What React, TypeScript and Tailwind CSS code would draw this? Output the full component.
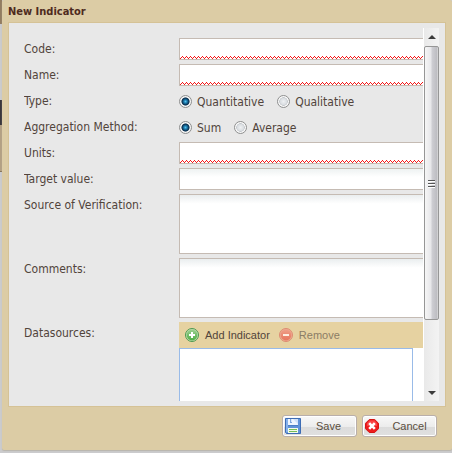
import { useState } from "react";
import type { ReactNode } from "react";

const FIELD_BORDER = "border border-r-0 border-[#c5bbb3]";

function Row({ id, label, children }: { id: string; label: string; children: ReactNode }) {
  return (
    <div className="mb-1 flex items-start">
      <label id={`${id}-label`} htmlFor={id} className="w-[155px] shrink-0 pt-[3px] leading-4">
        {label}
      </label>
      <div className="min-w-0 flex-1">{children}</div>
    </div>
  );
}

function Squiggle({ id }: { id: string }) {
  return (
    <svg className="block h-[3px] w-full" shapeRendering="crispEdges" aria-hidden="true">
      <defs>
        <pattern id={id} width="4" height="3" patternUnits="userSpaceOnUse">
          <path d="M0 2h1v1H0zM1 1h1v1H1zM2 0h1v1H2zM3 1h1v1H3z" fill="#f51414" />
        </pattern>
      </defs>
      <rect width="100%" height="3" fill={`url(#${id})`} />
    </svg>
  );
}

function TextRow({ id, label, invalid = false }: { id: string; label: string; invalid?: boolean }) {
  return (
    <Row id={id} label={label}>
      {invalid ? (
        <div className={`flex h-[22px] flex-col bg-white ${FIELD_BORDER}`}>
          <input id={id} type="text" aria-invalid="true" className="min-h-0 w-full flex-1 px-1 outline-none" />
          <Squiggle id={`${id}-wave`} />
        </div>
      ) : (
        <input
          id={id}
          type="text"
          className={`block h-[22px] w-full bg-linear-to-b from-[#eef2f2] to-white to-40% px-1 outline-none ${FIELD_BORDER}`}
        />
      )}
    </Row>
  );
}

function AreaRow({ id, label }: { id: string; label: string }) {
  return (
    <Row id={id} label={label}>
      <textarea
        id={id}
        className={`block h-[60px] w-full resize-none bg-linear-to-b from-[#eaeeef] to-white to-15% px-1 outline-none ${FIELD_BORDER}`}
      />
    </Row>
  );
}

function RadioRow({ id, label, options }: { id: string; label: string; options: string[] }) {
  const [value, setValue] = useState(options[0]);
  return (
    <div role="radiogroup" aria-labelledby={`${id}-label`} className="mb-1 flex h-[22px] items-start">
      <span id={`${id}-label`} className="w-[155px] shrink-0 pt-[3px] leading-4">
        {label}
      </span>
      <div className="flex gap-[13px] pt-1">
        {options.map((o) => (
          <label key={o} className="flex items-center gap-[5px] leading-4 whitespace-nowrap">
            <input
              type="radio"
              name={id}
              checked={value === o}
              onChange={() => setValue(o)}
              className="mb-[2px] size-[13px] shrink-0 appearance-none rounded-full border border-[#8e8f8f] bg-[radial-gradient(circle_closest-side,#eff1f3_0,#d8dce0_62%,#c0c4c8_72%,#f8f8f8_82%)] checked:bg-[radial-gradient(circle_closest-side,#58c4ee_0,#1d7fb2_28%,#0c3556_60%,#1c3f5a_68%,#f4f4f4_80%)]"
            />
            {o}
          </label>
        ))}
      </div>
    </div>
  );
}

function AddIcon() {
  return (
    <svg width="14" height="14" viewBox="0 0 14 14" aria-hidden="true">
      <defs>
        <linearGradient id="add-fill" x1="0" y1="0" x2="0" y2="1">
          <stop offset="0" stopColor="#9bcf90" />
          <stop offset="1" stopColor="#4fae46" />
        </linearGradient>
      </defs>
      <circle cx="7" cy="7" r="6.5" fill="#c3dfb3" stroke="#4c9850" />
      <circle cx="7" cy="7" r="5.4" fill="url(#add-fill)" />
      <path d="M6 4h2v2h2v2H8v2H6V8H4V6h2z" fill="#fff" />
    </svg>
  );
}

function RemoveIcon() {
  return (
    <svg width="14" height="14" viewBox="0 0 14 14" aria-hidden="true">
      <defs>
        <linearGradient id="remove-fill" x1="0" y1="0" x2="0" y2="1">
          <stop offset="0" stopColor="#ee9f88" />
          <stop offset="1" stopColor="#e7765e" />
        </linearGradient>
      </defs>
      <circle cx="7" cy="7" r="6.5" fill="#efac92" stroke="#dd8c72" />
      <circle cx="7" cy="7" r="5.4" fill="url(#remove-fill)" />
      <path d="M4 6h6v2H4z" fill="#fdeee2" />
    </svg>
  );
}

function SaveIcon() {
  return (
    <svg width="16" height="16" viewBox="0 0 16 16" aria-hidden="true">
      <path d="M.5.5h15v15h-14l-1-1z" fill="#5f92d8" stroke="#3d6cb4" />
      <path d="M1 1h2v13H1z" fill="#86b1ea" />
      <path d="M3 1h10v6H3z" fill="#eef5ff" />
      <path d="M8 1h5v5z" fill="#cfe0f8" />
      <path d="M5 1h2v4H5z" fill="#7fa6dc" />
      <path d="M6 1h1v3H6z" fill="#d8e6fa" />
      <path d="M3 7h10v1H3z" fill="#4b7dc6" />
      <path d="M3 10h10v5H3z" fill="#f4faec" />
      <path d="M4 11h8v1H4zM4 13h8v1H4z" fill="#76bd58" />
    </svg>
  );
}

function CancelIcon() {
  return (
    <svg width="14" height="14" viewBox="0 0 14 14" aria-hidden="true">
      <path d="M4.3.5h5.4l3.8 3.8v5.4l-3.8 3.8H4.3L.5 9.7V4.3z" fill="#ee1c1c" stroke="#d41414" />
      <path d="M4.5 1.5h5L12 4.2V7H2V4.2z" fill="#fa4545" />
      <path d="M4.2 4.2l5.6 5.6M9.8 4.2L4.2 9.8" stroke="#fff" strokeWidth="2.6" />
    </svg>
  );
}

const ACTION =
  "flex h-[22px] w-[75px] items-center rounded-[3px] border border-[#b9afab] bg-[linear-gradient(#f8f8f8_0,#ececec_55%,#dcdcdc_56%,#e0e0e0_100%)] pl-[2px] text-[11px] text-[#5a4e40] shadow-[inset_0_0_0_1px_#ffffff]";

function Scrollbar() {
  return (
    <div className="flex w-4 shrink-0 flex-col border-l border-white bg-linear-to-r from-[#e9e9e9] to-[#f3f3f3]" aria-hidden="true">
      <svg className="h-[18px] w-[15px] shrink-0" viewBox="0 0 15 18">
        <path d="M8 7L12 11H4z" fill="#3c3c3c" />
      </svg>
      <div className="flex h-[274px] w-[15px] shrink-0 items-center justify-center rounded-xs border border-[#969696] bg-[linear-gradient(90deg,#f6f6f6_0,#e6e6e9_48%,#cfcfd4_52%,#bdbdc2_90%,#dddddd_100%)]">
        <svg width="7" height="9" viewBox="0 0 7 9" shapeRendering="crispEdges">
          <path d="M0 1h7M0 4h7M0 7h7" stroke="#555" transform="translate(0 .5)" />
          <path d="M0 2h7M0 5h7M0 8h7" stroke="#fff" transform="translate(0 .5)" />
        </svg>
      </div>
      <div className="flex-1" />
      <svg className="h-[18px] w-[15px] shrink-0" viewBox="0 0 15 18">
        <path d="M4 8h8l-4 4z" fill="#3c3c3c" />
      </svg>
    </div>
  );
}

export default function App() {
  return (
    <div className="flex h-screen bg-[#cbcbcd] font-['DejaVu_Sans_Condensed','DejaVu_Sans',sans-serif] text-xs text-[#51443b]">
      <div className="flex w-[2px] shrink-0 flex-col" aria-hidden="true">
        <div className="h-6 bg-[#927c60]" />
        <div className="h-[76px] bg-[#cbcbcd]" />
        <div className="h-[25px] bg-[#39363b]" />
        <div className="h-[46px] bg-[#b3a083]" />
        <div className="h-px bg-[#857459]" />
      </div>
      <div className="flex min-w-0 flex-1 flex-col pb-[3px]">
        <section
          aria-labelledby="dialog-title"
          className="flex min-h-0 flex-1 flex-col rounded-xs bg-[#dccca5] shadow-[0_1px_1px_#b9b5ad]"
        >
          <h1 id="dialog-title" className="h-[22px] shrink-0 pt-[5px] pl-[6px] text-[11px] leading-[14px] font-bold text-[#4e2a20]">
            New Indicator
          </h1>
          <div className="mx-[6px] flex min-h-0 flex-1 border border-[#d5c296] bg-[#e8e8e8] py-[5px] pr-[6px] pl-[15px]">
            <form className="min-w-0 flex-1 overflow-hidden pt-[10px]">
              <TextRow id="code" label="Code:" invalid />
              <TextRow id="name" label="Name:" invalid />
              <RadioRow id="type" label="Type:" options={["Quantitative", "Qualitative"]} />
              <RadioRow id="aggregation" label="Aggregation Method:" options={["Sum", "Average"]} />
              <TextRow id="units" label="Units:" invalid />
              <TextRow id="target" label="Target value:" />
              <AreaRow id="source" label="Source of Verification:" />
              <AreaRow id="comments" label="Comments:" />
              <div className="flex items-start" role="group" aria-labelledby="datasources-label">
                <span id="datasources-label" className="w-[155px] shrink-0 pt-[3px] leading-4">
                  Datasources:
                </span>
                <div className="min-w-0 flex-1 bg-white font-['Liberation_Sans',Arial,sans-serif] text-[11px]">
                  <div className="flex h-[26px] items-center gap-[9px] bg-[#e6d2a1] pl-[6px]">
                    <button type="button" className="flex items-center gap-[6px]">
                      <AddIcon />
                      Add Indicator
                    </button>
                    <button type="button" disabled className="flex items-center gap-[6px] text-[#8b7d65]">
                      <RemoveIcon />
                      Remove
                    </button>
                  </div>
                  <div className="mr-[10px] h-[100px] border border-[#99bbe8] bg-white" />
                </div>
              </div>
            </form>
            <Scrollbar />
          </div>
          <div className="flex h-[43px] shrink-0 justify-end gap-[5px] pt-2 pr-[15px] font-['Liberation_Sans',Arial,sans-serif]">
            <button type="button" className={ACTION}>
              <SaveIcon />
              <span className="flex-1 text-center">Save</span>
            </button>
            <button type="button" className={ACTION}>
              <CancelIcon />
              <span className="flex-1 pl-1 text-center">Cancel</span>
            </button>
          </div>
        </section>
      </div>
    </div>
  );
}
